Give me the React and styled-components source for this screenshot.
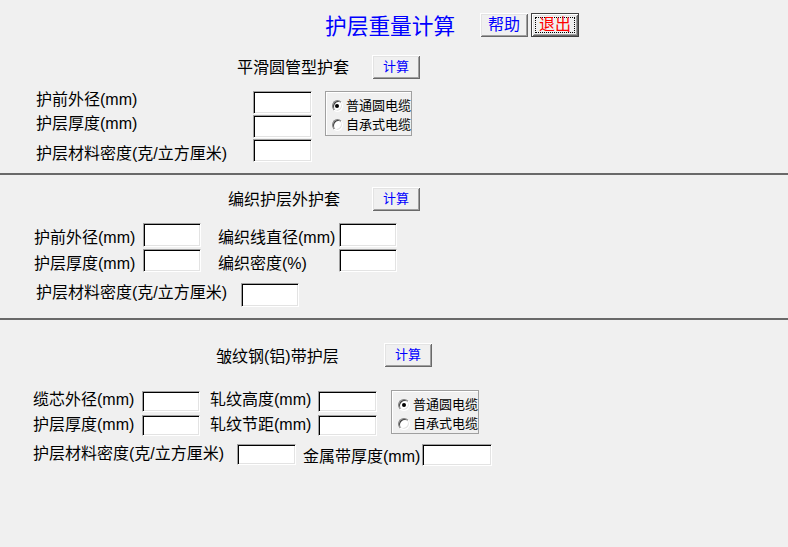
import React from "react";
import styled, { createGlobalStyle } from "styled-components";

const GlobalStyle = createGlobalStyle`
  html, body {
    margin: 0;
    padding: 0;
    background: #f0f0f0;
  }
`;

const Window = styled.div`
  min-height: 547px;
  background: #f0f0f0;
  font-family: "Liberation Sans", "Noto Sans CJK SC", sans-serif;
  color: #000;
  overflow: hidden;
`;

const Header = styled.div`
  display: flex;
  align-items: center;
  padding: 13px 0 0 325px;
  height: 24px;
`;

const Title = styled.div`
  font-size: 21.7px;
  line-height: 24px;
  color: #0000ff;
  width: 155px;
  padding-top: 3px;
`;

const Button = styled.button`
  position: relative;
  width: ${(p) => p.$w || 48}px;
  height: 24px;
  margin: 0 ${(p) => p.$gap || 0}px 0 0;
  padding: 0;
  border: ${(p) => (p.$default ? "1px solid #404040" : "none")};
  background: #f0f0f0;
  box-shadow: inset 1px 1px #fff, inset -1px -1px #696969, inset 2px 2px #e3e3e3,
    inset -2px -2px #a0a0a0;
  font-family: "Liberation Sans", "Noto Sans CJK SC", sans-serif;
  font-size: ${(p) => p.$size || 13}px;
  line-height: 20px;
  color: ${(p) => p.$color || "#0000ff"};
  display: flex;
  align-items: center;
  justify-content: center;
  flex-shrink: 0;
`;

const Focus = styled.span`
  display: flex;
  align-items: center;
  justify-content: center;
  width: 38px;
  height: 14px;
  border: 1px dotted #000;
  background: none;
`;

const SectionHead = styled.div`
  display: flex;
  align-items: center;
  height: 24px;
  margin-top: ${(p) => p.$top}px;
  padding-left: ${(p) => p.$left}px;
`;

const HeadText = styled.div`
  width: ${(p) => p.$w}px;
  font-size: 16px;
  line-height: 18px;
  padding-top: ${(p) => p.$drop || 0}px;
`;

const Divider = styled.div`
  height: 2px;
  background: #696969;
  margin-top: ${(p) => p.$top}px;
`;

const Block = styled.div`
  display: flex;
  align-items: flex-start;
  margin-top: ${(p) => p.$top}px;
  padding-left: ${(p) => p.$left}px;
`;

const Rows = styled.div`
  display: flex;
  flex-direction: column;
  gap: ${(p) => p.$gap}px;
`;

const Row = styled.div`
  display: flex;
  align-items: flex-start;
  margin-top: ${(p) => p.$top || 0}px;
  padding-left: ${(p) => p.$left || 0}px;
`;

/* the drop moves the text down without making the row taller */
const Label = styled.div`
  width: ${(p) => p.$w}px;
  margin-left: ${(p) => p.$ml || 0}px;
  padding-top: ${(p) => p.$drop || 0}px;
  margin-bottom: -${(p) => p.$drop || 0}px;
  font-size: 16px;
  line-height: 18px;
  white-space: nowrap;
  flex-shrink: 0;
`;

const Input = styled.input`
  box-sizing: border-box;
  width: ${(p) => p.$w || 58}px;
  height: ${(p) => p.$h || 23}px;
  margin: 0;
  padding: 0 3px;
  background: #fff;
  border: 1px solid;
  border-color: #a0a0a0 #fff #fff #a0a0a0;
  box-shadow: inset 1px 1px #000, inset -1px -1px #e3e3e3;
  outline: none;
  flex-shrink: 0;
`;

const Frame = styled.div`
  box-sizing: border-box;
  width: ${(p) => p.$w}px;
  height: ${(p) => p.$h}px;
  margin-left: ${(p) => p.$ml}px;
  margin-top: ${(p) => p.$mt || 0}px;
  border: 1px solid #a0a0a0;
  box-shadow: inset 1px 1px #fff;
  padding: 5px 0 0 6px;
  display: flex;
  flex-direction: column;
  gap: 2px;
`;

const Option = styled.div`
  display: flex;
  align-items: center;
  gap: 3px;
  height: 17px;
  font-size: 13px;
  line-height: 17px;
  white-space: nowrap;
`;

const Radio = styled.span`
  box-sizing: border-box;
  width: 12px;
  height: 12px;
  border-radius: 50%;
  background: #fff;
  border: 1px solid;
  border-color: #808080 #fff #fff #808080;
  box-shadow: inset 1px 1px #404040, inset -1px -1px #e3e3e3;
  display: flex;
  align-items: center;
  justify-content: center;

  &::after {
    content: "";
    width: 4px;
    height: 4px;
    border-radius: 50%;
    background: ${(p) => (p.$checked ? "#000" : "transparent")};
  }
`;

const CableType = ({ w, h, ml, mt }) => (
  <Frame $w={w} $h={h} $ml={ml} $mt={mt}>
    <Option>
      <Radio $checked />
      普通圆电缆
    </Option>
    <Option>
      <Radio />
      自承式电缆
    </Option>
  </Frame>
);

export default function App() {
  return (
    <Window>
      <GlobalStyle />
      <Header>
        <Title>护层重量计算</Title>
        <Button $size={16} $gap={3}>
          帮助
        </Button>
        <Button $size={16} $color="#ff0000" $default>
          <Focus>退出</Focus>
        </Button>
      </Header>

      {/* 平滑圆管型护套 */}
      <SectionHead $top={18} $left={237}>
        <HeadText $w={135} $drop={2}>
          平滑圆管型护套
        </HeadText>
        <Button>计算</Button>
      </SectionHead>
      <Block $top={12} $left={36}>
        <Rows $gap={1}>
          <Row>
            <Label $w={217}>护前外径(mm)</Label>
            <Input $w={59} />
          </Row>
          <Row>
            <Label $w={217}>护层厚度(mm)</Label>
            <Input $w={59} />
          </Row>
          <Row>
            <Label $w={217} $drop={6}>
              护层材料密度(克/立方厘米)
            </Label>
            <Input $w={59} />
          </Row>
        </Rows>
        <CableType w={87} h={45} ml={13} />
      </Block>
      <Divider $top={11} />

      {/* 编织护层外护套 */}
      <SectionHead $top={12} $left={228}>
        <HeadText $w={144} $drop={1}>
          编织护层外护套
        </HeadText>
        <Button>计算</Button>
      </SectionHead>
      <Block $top={12} $left={34}>
        <Rows $gap={2}>
          <Row>
            <Label $w={109} $drop={6}>
              护前外径(mm)
            </Label>
            <Input $h={24} />
            <Label $w={121} $ml={17} $drop={6}>
              编织线直径(mm)
            </Label>
            <Input $h={24} />
          </Row>
          <Row>
            <Label $w={109} $drop={6}>
              护层厚度(mm)
            </Label>
            <Input />
            <Label $w={121} $ml={17} $drop={6}>
              编织密度(%)
            </Label>
            <Input />
          </Row>
        </Rows>
      </Block>
      <Row $top={11} $left={36}>
        <Label $w={205} $drop={1}>
          护层材料密度(克/立方厘米)
        </Label>
        <Input $h={24} />
      </Row>
      <Divider $top={11} />

      {/* 皱纹钢(铝)带护层 */}
      <SectionHead $top={23} $left={216}>
        <HeadText $w={168} $drop={3}>
          皱纹钢(铝)带护层
        </HeadText>
        <Button>计算</Button>
      </SectionHead>
      <Block $top={24} $left={33}>
        <Rows $gap={3}>
          <Row>
            <Label $w={109}>缆芯外径(mm)</Label>
            <Input $h={21} />
            <Label $w={108} $ml={10}>
              轧纹高度(mm)
            </Label>
            <Input $w={59} $h={21} />
          </Row>
          <Row>
            <Label $w={109} $drop={1}>
              护层厚度(mm)
            </Label>
            <Input $h={21} />
            <Label $w={108} $ml={10} $drop={1}>
              轧纹节距(mm)
            </Label>
            <Input $w={59} $h={21} />
          </Row>
        </Rows>
        <CableType w={88} h={44} ml={14} mt={-1} />
      </Block>
      <Row $top={8} $left={33}>
        <Label $w={204} $drop={1}>
          护层材料密度(克/立方厘米)
        </Label>
        <Input $w={59} $h={21} />
        <Label $w={119} $ml={7} $drop={4}>
          金属带厚度(mm)
        </Label>
        <Input $w={70} $h={22} />
      </Row>
    </Window>
  );
}
